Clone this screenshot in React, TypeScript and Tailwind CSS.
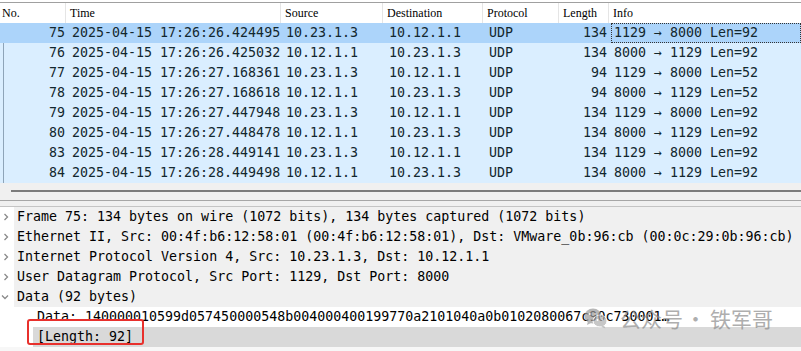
const mono = "font-['DejaVu_Sans_Mono','Liberation_Mono',monospace] text-[13.3px]";

type Pkt = { no: string; time: string; src: string; dst: string; len: string; info: string };

const packets: Pkt[] = [
  { no: "75", time: "2025-04-15 17:26:26.424495", src: "10.23.1.3", dst: "10.12.1.1", len: "134", info: "1129 → 8000 Len=92" },
  { no: "76", time: "2025-04-15 17:26:26.425032", src: "10.12.1.1", dst: "10.23.1.3", len: "134", info: "8000 → 1129 Len=92" },
  { no: "77", time: "2025-04-15 17:26:27.168361", src: "10.23.1.3", dst: "10.12.1.1", len: "94", info: "1129 → 8000 Len=52" },
  { no: "78", time: "2025-04-15 17:26:27.168618", src: "10.12.1.1", dst: "10.23.1.3", len: "94", info: "8000 → 1129 Len=52" },
  { no: "79", time: "2025-04-15 17:26:27.447948", src: "10.23.1.3", dst: "10.12.1.1", len: "134", info: "1129 → 8000 Len=92" },
  { no: "80", time: "2025-04-15 17:26:27.448478", src: "10.12.1.1", dst: "10.23.1.3", len: "134", info: "8000 → 1129 Len=92" },
  { no: "83", time: "2025-04-15 17:26:28.449141", src: "10.23.1.3", dst: "10.12.1.1", len: "134", info: "1129 → 8000 Len=92" },
  { no: "84", time: "2025-04-15 17:26:28.449498", src: "10.12.1.1", dst: "10.23.1.3", len: "134", info: "8000 → 1129 Len=92" },
];

const tree = [
  "Frame 75: 134 bytes on wire (1072 bits), 134 bytes captured (1072 bits)",
  "Ethernet II, Src: 00:4f:b6:12:58:01 (00:4f:b6:12:58:01), Dst: VMware_0b:96:cb (00:0c:29:0b:96:cb)",
  "Internet Protocol Version 4, Src: 10.23.1.3, Dst: 10.12.1.1",
  "User Datagram Protocol, Src Port: 1129, Dst Port: 8000",
];

function Chevron({ open }: { open?: boolean }) {
  return (
    <svg width="8" height="8" viewBox="0 0 8 8" className="shrink-0">
      {open ? (
        <path d="M1 2.5 L4 5.5 L7 2.5" fill="none" stroke="#8a8a8a" strokeWidth="1.3" />
      ) : (
        <path d="M2.5 1 L5.5 4 L2.5 7" fill="none" stroke="#8a8a8a" strokeWidth="1.3" />
      )}
    </svg>
  );
}

function HeaderCell({ w, label, extra = "" }: { w: string; label: string; extra?: string }) {
  return (
    <div className={`${w} h-full shrink-0 border-r border-[#e5e5e5] flex items-center pl-[4px] ${extra}`}>
      {label}
    </div>
  );
}

function PacketRow({ p, selected }: { p: Pkt; selected: boolean }) {
  return (
    <div className={`flex h-[20px] items-center text-[#12272e] ${selected ? "bg-[#acd4fa]" : "bg-[#daeeff]"}`}>
      <div className="w-[68px] shrink-0 text-right pr-[3px]">{p.no}</div>
      <div className="w-[215px] shrink-0 pl-[4px]">{p.time}</div>
      <div className="w-[102px] shrink-0 pl-[3px]">{p.src}</div>
      <div className="w-[100px] shrink-0 pl-[4px]">{p.dst}</div>
      <div className="w-[76px] shrink-0 pl-[4px]">UDP</div>
      <div className="w-[50px] shrink-0 text-right pr-[4px]">{p.len}</div>
      <div
        className={`flex-1 h-full flex items-center pl-[2px] ${
          selected ? "border border-dotted border-[#333]" : "pl-[3px]"
        }`}
      >
        {p.info}
      </div>
    </div>
  );
}

function WeChatIcon() {
  return (
    <svg width="24" height="22" viewBox="0 0 24 22">
      <ellipse cx="9" cy="9" rx="8.5" ry="7.5" fill="#9a9a9a" />
      <path d="M4 14 L3 18 L8 15.5 Z" fill="#9a9a9a" />
      <ellipse cx="16" cy="14" rx="7" ry="6" fill="#b0b0b0" stroke="#fff" strokeWidth="1" />
      <path d="M20 18.5 L21.5 21.5 L17 19.5 Z" fill="#b0b0b0" />
      <circle cx="6" cy="7" r="1.1" fill="#fff" />
      <circle cx="11.5" cy="7" r="1.1" fill="#fff" />
      <circle cx="13.5" cy="13" r="0.9" fill="#fff" />
      <circle cx="18.5" cy="13" r="0.9" fill="#fff" />
    </svg>
  );
}

export default function App() {
  return (
    <div className={`relative w-[801px] h-[351px] overflow-hidden bg-white ${mono}`}>
      {/* packet list */}
      <div className="h-[2px] bg-white" />
      <div className="h-px bg-[#a0a0a0]" />
      <div className="flex h-[20px] bg-white text-black font-['Liberation_Serif',serif] text-[12px]">
        <HeaderCell w="w-[68px]" label="No." extra="pl-0 -ml-[2px]" />
        <HeaderCell w="w-[215px]" label="Time" />
        <HeaderCell w="w-[102px]" label="Source" />
        <HeaderCell w="w-[100px]" label="Destination" />
        <HeaderCell w="w-[76px]" label="Protocol" />
        <HeaderCell w="w-[50px]" label="Length" />
        <div className="flex-1 flex items-center pl-[4px]">Info</div>
      </div>
      <div className="relative">
        {packets.map((p, i) => (
          <PacketRow key={p.no} p={p} selected={i === 0} />
        ))}
        <div className="absolute left-[3px] top-[20px] bottom-0 w-px bg-[#8ea4b8]" />
      </div>

      {/* splitter */}
      <div className="h-[24px] bg-[#f0f0f0] flex flex-col">
        <div className="h-[7px]" />
        <div className="h-[2px] ml-[11px] bg-[#7c7c7c]" />
        <div className="h-[8px]" />
        <div className="h-px bg-[#a6a6a6]" />
        <div className="h-[5px]" />
        <div className="h-px bg-[#c4c4c4]" />
      </div>

      {/* packet details */}
      <div className="flex flex-col text-black">
        {tree.map((t) => (
          <div key={t} className="flex h-[20px] items-center">
            <div className="w-[14px] h-full shrink-0 bg-white flex items-center pl-[2px]">
              <Chevron />
            </div>
            <div className="flex-1 h-full flex items-center pl-[3px] bg-[#f0f0f0] whitespace-nowrap">{t}</div>
          </div>
        ))}
        <div className="flex h-[20px] items-center">
          <div className="w-[14px] h-full shrink-0 bg-white flex items-center pl-[1px]">
            <Chevron open />
          </div>
          <div className="flex-1 h-full flex items-center pl-[3px] bg-[#f0f0f0]">Data (92 bytes)</div>
        </div>
        <div className="flex h-[20px] items-center bg-white pl-[37px] whitespace-nowrap">
          Data: 140000010599d057450000548b004000400199770a2101040a0b0102080067c90c730001…
        </div>
        <div className="flex h-[20px] items-center">
          <div className="w-[33px] h-full shrink-0 bg-white" />
          <div className="flex-1 h-full flex items-center pl-[4px] bg-[#d9d9d9]">[Length: 92]</div>
        </div>
        <div className="h-[4px] bg-[#f7f7f7]" />
      </div>

      {/* annotation */}
      <div className="absolute left-[27px] top-[319px] w-[117px] h-[26px] border-2 border-[#e8302c] rounded-[3px]" />

      {/* watermark */}
      <div className="absolute left-[584px] top-[307px] flex items-center opacity-70 text-[#8c8c8c] font-['Noto_Sans_CJK_SC',sans-serif] text-[21px] leading-none">
        <WeChatIcon />
        <span className="ml-[12px]">公众号</span>
        <span className="ml-[2px]">·</span>
        <span className="ml-[4px]">铁军哥</span>
      </div>
    </div>
  );
}
